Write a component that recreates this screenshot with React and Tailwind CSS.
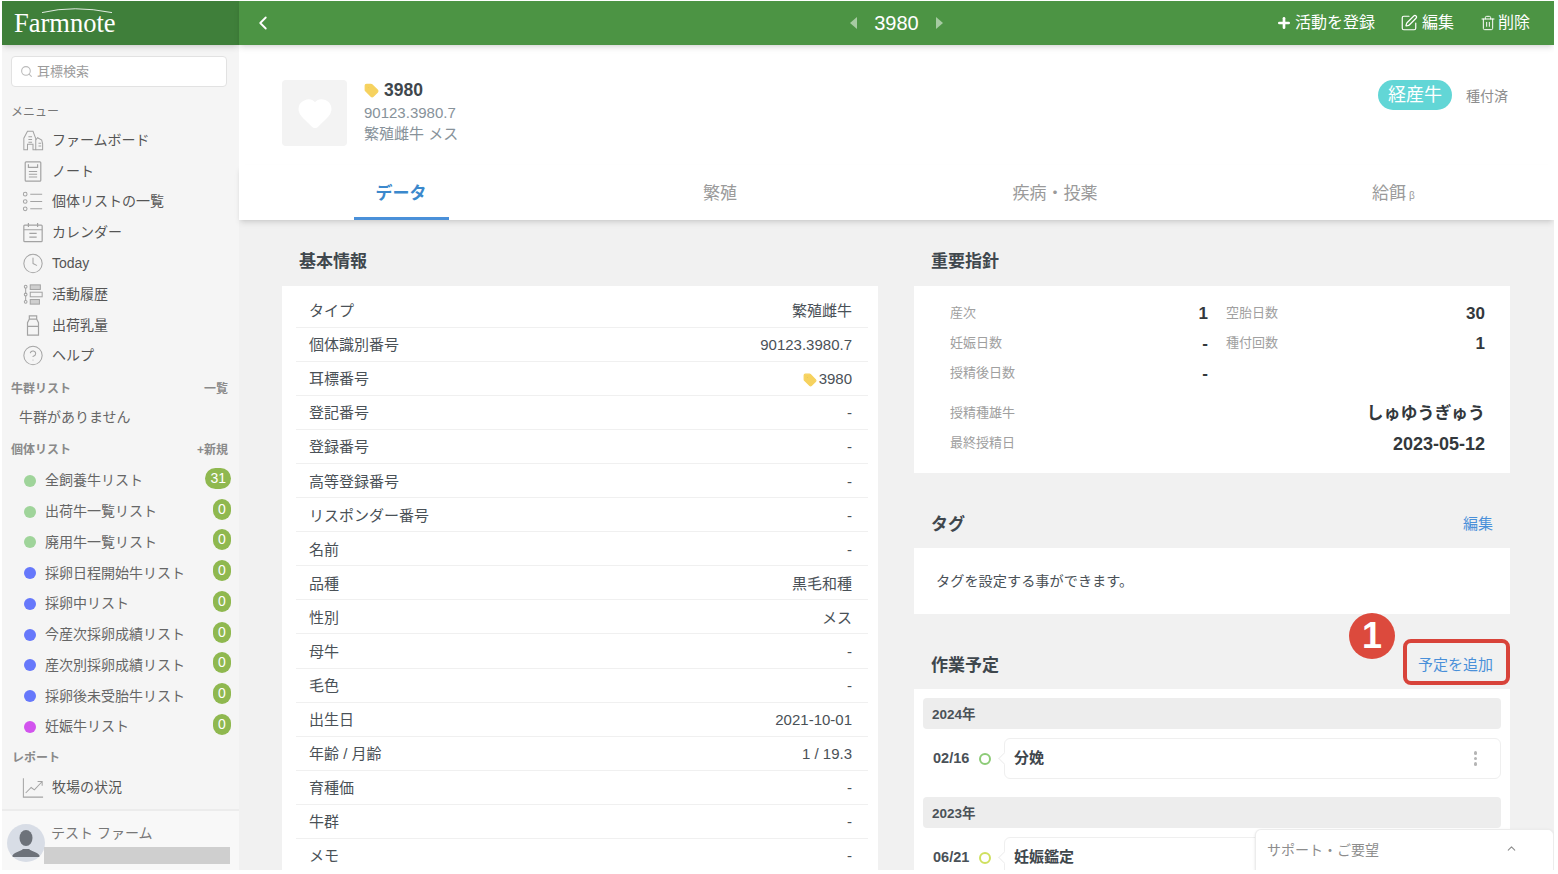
import React from "react";
import {
  ChevronLeft,
  ChevronUp,
  CircleHelp,
  Clock,
  Heart,
  Plus,
  Search,
  SquarePen,
  Tag,
  Trash2,
} from "lucide-react";

const iconProps = {
  viewBox: "0 0 24 24",
  fill: "none",
  stroke: "#a3a3a3",
  strokeWidth: 1.1,
  className: "h-[23px] w-[23px]",
};

const BarnIcon = () => (
  <svg {...iconProps}>
    <path d="M2 22V9.500L6 2h6l3 8v12h-3v-6H6v6H2z" />
    <path d="M15 11.500l2-2.500 4.500 2.500 1 4V22H15" />
    <path d="M7 8h4M7 11h4M7 14h4M18 18h3M18 15h3" />
  </svg>
);
const NoteIcon = () => (
  <svg {...iconProps} strokeWidth={1.3}>
    <rect x="3.500" y="1.500" width="17" height="21" rx="1" />
    <path d="M7 4v3.500h10V4M7.500 12h9M7.500 15h9M7.500 18h9" />
  </svg>
);
const ListIcon = () => (
  <svg {...iconProps}>
    <circle cx="3.500" cy="4" r="2" />
    <circle cx="3.500" cy="12" r="2" />
    <circle cx="3.500" cy="20" r="2" />
    <path d="M9 4h13M9 12h13M9 20h13" />
  </svg>
);
const CalendarIcon = () => (
  <svg {...iconProps} strokeWidth={1.3}>
    <rect x="2" y="4" width="20" height="18" rx="1" />
    <path d="M2 9h20M7 1.500V6M17 1.500V6M8 13h8M8 17h8" />
  </svg>
);
const HistoryIcon = () => (
  <svg {...iconProps}>
    <circle cx="4" cy="3.500" r="1.500" />
    <circle cx="4" cy="12" r="1.500" />
    <circle cx="4" cy="20" r="1.500" />
    <path d="M4 5v5.500M4 13.500V18.500" />
    <rect x="9" y="1.500" width="11" height="5" fill="#cfcfcf" />
    <rect x="9" y="9.500" width="13" height="5" />
    <rect x="9" y="17.500" width="10" height="5" fill="#cfcfcf" />
  </svg>
);
const BottleIcon = () => (
  <svg {...iconProps} strokeWidth={1.3}>
    <path d="M8 1.500h8v3.500l2 4v13.500H6V9l2-4V1.500zM8 5h8M6 13h12" />
  </svg>
);
const ChartIcon = () => (
  <svg {...iconProps}>
    <path d="M1.500 2v20.500H23" />
    <path d="M4 18l6-6 3.500 2.500L21.500 6M17 5.500h5V10" />
  </svg>
);

const menu = [
  { label: "ファームボード", icon: <BarnIcon /> },
  { label: "ノート", icon: <NoteIcon /> },
  { label: "個体リストの一覧", icon: <ListIcon /> },
  { label: "カレンダー", icon: <CalendarIcon /> },
  { label: "Today", icon: <Clock size={23} strokeWidth={1.1} color="#a3a3a3" /> },
  { label: "活動履歴", icon: <HistoryIcon /> },
  { label: "出荷乳量", icon: <BottleIcon /> },
  { label: "ヘルプ", icon: <CircleHelp size={23} strokeWidth={1.1} color="#a3a3a3" /> },
];

const lists = [
  { label: "全飼養牛リスト", dot: "bg-[#9fd49a]", count: 31 },
  { label: "出荷牛一覧リスト", dot: "bg-[#9fd49a]", count: 0 },
  { label: "廃用牛一覧リスト", dot: "bg-[#9fd49a]", count: 0 },
  { label: "採卵日程開始牛リスト", dot: "bg-[#6678fb]", count: 0 },
  { label: "採卵中リスト", dot: "bg-[#6678fb]", count: 0 },
  { label: "今産次採卵成績リスト", dot: "bg-[#6678fb]", count: 0 },
  { label: "産次別採卵成績リスト", dot: "bg-[#6678fb]", count: 0 },
  { label: "採卵後未受胎牛リスト", dot: "bg-[#6678fb]", count: 0 },
  { label: "妊娠牛リスト", dot: "bg-[#d254ee]", count: 0 },
];

const basicInfo = [
  ["タイプ", "繁殖雌牛"],
  ["個体識別番号", "90123.3980.7"],
  ["耳標番号", "3980"],
  ["登記番号", "-"],
  ["登録番号", "-"],
  ["高等登録番号", "-"],
  ["リスポンダー番号", "-"],
  ["名前", "-"],
  ["品種", "黒毛和種"],
  ["性別", "メス"],
  ["母牛", "-"],
  ["毛色", "-"],
  ["出生日", "2021-10-01"],
  ["年齢 / 月齢", "1 / 19.3"],
  ["育種価", "-"],
  ["牛群", "-"],
  ["メモ", "-"],
];

function Sidebar() {
  return (
    <aside className="relative flex h-full w-[237px] shrink-0 flex-col bg-[#f5f5f5]">
      <div className="z-10 flex h-[44px] items-center bg-[#3f7f3a] pl-[12px] shadow-md">
        <div className="relative font-['Liberation_Serif',serif] text-[26.500px] leading-none text-white">
          Farmnote
          <svg viewBox="0 0 100 10" className="absolute -top-[3px] left-[24px] h-[7px] w-[78px]" fill="none" stroke="#fff" strokeWidth="1.200">
            <path d="M0 8Q45-3 100 8" />
          </svg>
        </div>
      </div>
      <div className="mx-[9px] mt-[11px] flex h-[31px] w-[216px] items-center gap-[4px] rounded border border-[#e2e2e2] bg-white pl-[8px] text-[13px] text-[#9b9b9b]">
        <Search size={13} color="#bbbbbb" />
        耳標検索
      </div>
      <div className="mx-[9px] mt-[17px] text-[12px] leading-[16px] text-[#777]">メニュー</div>
      <ul className="mt-[5px]">
        {menu.map((item) => (
          <li key={item.label} className="flex h-[30.800px] items-center gap-[8px] pl-[20px] text-[14px] text-[#555]">
            <span className="flex w-[22px] justify-center">{item.icon}</span>
            {item.label}
          </li>
        ))}
      </ul>
      <div className="ml-[9px] mr-[11px] mt-[10px] flex justify-between text-[12px] leading-[16px] font-bold text-[#8a8a8a]">
        <span>牛群リスト</span>
        <span>一覧</span>
      </div>
      <div className="ml-[17px] mt-[11px] text-[14px] leading-[18px] text-[#666]">牛群がありません</div>
      <div className="ml-[9px] mr-[11px] mt-[16px] flex items-center justify-between text-[12px] leading-[16px] font-bold text-[#8a8a8a]">
        <span>個体リスト</span>
        <span>+新規</span>
      </div>
      <ul className="mt-[7px]">
        {lists.map((item) => (
          <li key={item.label} className="flex h-[30.750px] items-center pl-[22px] pr-[8px] text-[14px] text-[#666]">
            <span className={`h-[12px] w-[12px] rounded-full ${item.dot}`} />
            <span className="ml-[9px] flex-1">{item.label}</span>
            <span className="-mt-[5px] flex h-[21px] min-w-[18px] items-center justify-center rounded-full bg-[#8fb84f] px-[5px] text-[14px] text-white">
              {item.count}
            </span>
          </li>
        ))}
      </ul>
      <div className="mx-[10px] mt-[8px] text-[12px] leading-[16px] font-bold text-[#8a8a8a]">レポート</div>
      <div className="mt-[6px] flex h-[30px] items-center gap-[8px] pl-[20px] text-[14px] text-[#555]">
        <span className="flex w-[22px] justify-center">
          <ChartIcon />
        </span>
        牧場の状況
      </div>
      <div className="mt-[7px] flex-1 border-t-2 border-[#ececec] bg-[#f8f8f8]">
        <div className="relative pl-[49px] pt-[13px] text-[14px] leading-[18px] text-[#777]">
          テスト ファーム
          <div className="absolute left-[5px] top-[13px] flex h-[38px] w-[38px] items-end justify-center overflow-hidden rounded-full bg-[#d8dde6]">
            <svg viewBox="0 0 38 38" className="h-[38px] w-[38px]" fill="#6d727a">
              <ellipse cx="19" cy="14" rx="6.500" ry="8" />
              <path d="M5 33c1-5 8-5 11-8h6c3 3 10 3 11 8z" />
            </svg>
          </div>
          <div className="absolute left-[42px] top-[36px] h-[17px] w-[186px] bg-[#cfcfcf]" />
        </div>
      </div>
    </aside>
  );
}

function Topbar() {
  return (
    <header className="z-20 grid h-[44px] shrink-0 grid-cols-[1fr_auto_1fr] items-center bg-[#4c9444] px-[13px] text-white shadow-md">
      <ChevronLeft size={22} strokeWidth={2} />
      <div className="flex items-center gap-[17px]">
        <span className="h-0 w-0 border-y-[6px] border-r-[7px] border-y-transparent border-r-[#a6cba2]" />
        <span className="text-[20px]">3980</span>
        <span className="h-0 w-0 border-y-[6px] border-l-[7px] border-y-transparent border-l-[#a6cba2]" />
      </div>
      <div className="mr-[11px] flex items-center justify-end text-[16px]">
        <Plus size={16} strokeWidth={4} />
        <span className="ml-[3px]">活動を登録</span>
        <SquarePen size={18} strokeWidth={1.600} className="ml-[25px]" />
        <span className="ml-[4px]">編集</span>
        <Trash2 size={16} strokeWidth={1.500} className="ml-[26px]" />
        <span className="ml-[2px]">削除</span>
      </div>
    </header>
  );
}

function Profile() {
  return (
    <div className="flex h-[120px] shrink-0 items-start bg-white pl-[43px] pr-[46px] pt-[35px]">
      <div className="flex h-[66px] w-[65px] items-center justify-center rounded bg-[#f3f3f3]">
        <Heart size={36} fill="#ffffff" color="#ffffff" />
      </div>
      <div className="ml-[17px] flex-1">
        <div className="flex h-[20px] items-center gap-[5px] text-[17.500px] font-bold text-[#3f474d]">
          <Tag size={15} fill="#f6d25f" color="#f6d25f" />
          3980
        </div>
        <div className="mt-[3px] text-[15px] leading-[20px] text-[#87929a]">90123.3980.7</div>
        <div className="mt-px text-[15px] leading-[20px] text-[#87929a]">繁殖雌牛 メス</div>
      </div>
      <div className="flex h-[30px] w-[74px] items-center justify-center rounded-full bg-[#62d6d6] text-[18px] text-white">経産牛</div>
      <div className="ml-[14px] mt-[7px] text-[14px] leading-[18px] text-[#8d8d8d]">種付済</div>
    </div>
  );
}

function Tabs() {
  return (
    <nav className="z-10 grid h-[55px] shrink-0 grid-cols-[324px_314px_356px_1fr] bg-white text-center text-[17px] text-[#9a9a9a] shadow-md">
      <div className="flex justify-center">
        <span className="flex w-[95px] items-center justify-center border-b-[3px] border-[#4a90d9] pt-[6px] font-bold text-[#3b88cc]">データ</span>
      </div>
      <div className="flex items-center justify-center pt-[2px]">繁殖</div>
      <div className="flex items-center justify-center pt-[2px]">疾病・投薬</div>
      <div className="flex items-center justify-center pt-[2px]">
        給餌<span className="ml-[3px] mt-[4px] text-[10px]">β</span>
      </div>
    </nav>
  );
}

function SectionTitle({ title, action, className = "pt-[2px]" }) {
  return (
    <div className={`flex h-[50px] items-center justify-between px-[17px] ${className}`}>
      <h2 className="text-[17px] font-bold text-[#3f474d]">{title}</h2>
      {action && <span className="-mt-[2px] text-[15px] text-[#4a90d9]">{action}</span>}
    </div>
  );
}

function BasicInfo() {
  return (
    <section className="w-[596px] shrink-0">
      <div className="pt-[16px]">
        <SectionTitle title="基本情報" />
      </div>
      <div className="bg-white pb-[20px] pl-[14px] pr-[10px] pt-[8px]">
        {basicInfo.map(([label, value]) => (
          <div key={label} className="flex h-[34.060px] items-center justify-between border-b border-[#f0f0f0] pl-[13px] pr-[16px] pt-[2px] text-[15px] text-[#4a5157]">
            <span>{label}</span>
            <span className="flex items-center gap-[2px]">
              {label === "耳標番号" && <Tag size={14} fill="#f6d25f" color="#f6d25f" />}
              {value}
            </span>
          </div>
        ))}
      </div>
    </section>
  );
}

function Stat({ label, value, className = "", valueClass = "text-[17px]" }) {
  return (
    <div className={`flex h-[30px] items-center justify-between ${className}`}>
      <span className="-mt-[2px] text-[13px] text-[#a0a0a0]">{label}</span>
      <span className={`font-bold text-[#33383c] ${valueClass}`}>{value}</span>
    </div>
  );
}

function ScheduleRow({ date, ring, name, menu }) {
  return (
    <div className="flex items-center">
      <span className="ml-[10px] w-[46px] text-[14.500px] font-bold text-[#4a5157]">{date}</span>
      <span className={`h-[12px] w-[12px] rounded-full border-2 ${ring}`} />
      <div className="relative ml-[13px] flex h-[41px] flex-1 items-center justify-between rounded-md border border-[#efefef] bg-white pl-[9px] pr-[23px] text-[15px] font-bold text-[#3f474d]">
        <span className="absolute -left-[5px] top-[15px] h-[9px] w-[9px] rotate-45 border-b border-l border-[#efefef] bg-white" />
        {name}
        {menu && (
          <span className="flex flex-col gap-[2px]">
            <i className="h-[3.500px] w-[3.500px] rounded-full bg-[#b5b5b5]" />
            <i className="h-[3.500px] w-[3.500px] rounded-full bg-[#b5b5b5]" />
            <i className="h-[3.500px] w-[3.500px] rounded-full bg-[#b5b5b5]" />
          </span>
        )}
      </div>
    </div>
  );
}

function RightColumn() {
  return (
    <section className="w-[596px] shrink-0">
      <div className="pt-[16px]">
        <SectionTitle title="重要指針" />
      </div>
      <div className="bg-white pb-[14px] pl-[36px] pr-[25px] pt-[13px]">
        <div className="grid grid-cols-[258px_259px] gap-x-[18px]">
          <Stat label="産次" value="1" />
          <Stat label="空胎日数" value="30" />
          <Stat label="妊娠日数" value="-" />
          <Stat label="種付回数" value="1" />
          <Stat label="授精後日数" value="-" />
        </div>
        <Stat label="授精種雄牛" value="しゅゆうぎゅう" className="mt-[10px]" />
        <Stat label="最終授精日" value="2023-05-12" valueClass="text-[18px]" />
      </div>
      <div className="pt-[25px]">
        <SectionTitle title="タグ" action="編集" className="pt-[4px]" />
      </div>
      <div className="flex h-[66px] items-center bg-white pl-[22px] pt-[1px] text-[14.200px] text-[#4a5157]">タグを設定する事ができます。</div>
      <div className="relative pt-[25px]">
        <SectionTitle title="作業予定" action="予定を追加" className="pt-[4px]" />
        <div className="absolute right-0 top-[25px] h-[46px] w-[107px] rounded-lg border-[4px] border-[#d8433a]" />
        <div className="absolute right-[115px] top-[-1px] flex h-[46px] w-[46px] items-center justify-center rounded-full bg-[#dc4a3d] text-[36px] font-bold leading-none text-white">1</div>
      </div>
      <div className="flex flex-col bg-white px-[9px] pt-[9px]">
        <div className="flex h-[31px] items-center rounded bg-[#ededed] pl-[9px] pt-[3px] text-[13.500px] font-bold text-[#4a5157]">2024年</div>
        <div className="mt-[9px]">
          <ScheduleRow date="02/16" ring="border-[#8ccb76]" name="分娩" menu />
        </div>
        <div className="mt-[18px] flex h-[31px] items-center rounded bg-[#ededed] pl-[9px] pt-[3px] text-[13.500px] font-bold text-[#4a5157]">2023年</div>
        <div className="mt-[9px]">
          <ScheduleRow date="06/21" ring="border-[#cfe05f]" name="妊娠鑑定" />
        </div>
      </div>
    </section>
  );
}

export default function App() {
  return (
    <div className="h-screen overflow-hidden bg-white pb-[4px] pl-[2px] pr-[4px] pt-px font-['Liberation_Sans','Noto_Sans_CJK_JP',sans-serif]">
      <div className="relative flex h-full overflow-hidden">
        <Sidebar />
        <main className="flex min-w-0 flex-1 flex-col">
          <Topbar />
          <Profile />
          <Tabs />
          <div className="flex flex-1 gap-[36px] overflow-hidden bg-[#f1f1f1] pl-[43px]">
            <BasicInfo />
            <RightColumn />
          </div>
        </main>
        <div className="absolute bottom-0 right-0 z-30 flex h-[41px] w-[299px] items-start justify-between rounded-t-md border border-b-0 border-[#ececec] bg-white pl-[11px] pr-[35px] pt-[11px] text-[14px] leading-[18px] text-[#8d8d8d] shadow-sm">
          サポート・ご要望
          <ChevronUp size={13} className="mt-[1px]" />
        </div>
      </div>
    </div>
  );
}
